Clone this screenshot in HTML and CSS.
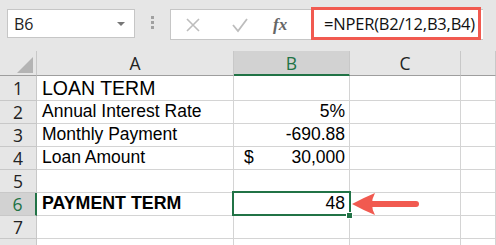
FILE: index.html
```html
<!DOCTYPE html>
<html lang="en">
<head>
  <meta charset="UTF-8" />
  <title>Loan Term</title>
  <link rel="stylesheet" href="styles.css">
</head>
<body>
  <!-- Formula bar -->
  <div class="toolbar">
    <div class="namebox">
      <span>B6</span>
      <span class="caret"></span>
    </div>
    <div class="grip"><i></i><i></i><i></i></div>
    <div class="formulabar">
      <svg class="ico" width="16" height="16" viewBox="0 0 16 16"><path d="M2 2 L14 14 M14 2 L2 14" stroke="#bdbdbd" stroke-width="1.6" fill="none"/></svg>
      <svg class="ico check" width="18" height="16" viewBox="0 0 18 16"><path d="M2 8 L7 14 L16 2" stroke="#bdbdbd" stroke-width="1.8" fill="none"/></svg>
      <span class="fx">fx</span>
      <div class="formula">=NPER(B2/12,B3,B4)</div>
    </div>
  </div>

  <!-- Sheet -->
  <div class="sheet">
    <div class="hd corner"><span class="tri"></span></div>
    <div class="hd">A</div>
    <div class="hd sel-col">B</div>
    <div class="hd">C</div>
    <div class="hd"></div>

    <div class="rn">1</div>
    <div class="cell title">LOAN TERM</div>
    <div class="cell"></div>
    <div class="cell"></div>
    <div class="cell"></div>

    <div class="rn">2</div>
    <div class="cell">Annual Interest Rate</div>
    <div class="cell num">5%</div>
    <div class="cell"></div>
    <div class="cell"></div>

    <div class="rn">3</div>
    <div class="cell">Monthly Payment</div>
    <div class="cell num">-690.88</div>
    <div class="cell"></div>
    <div class="cell"></div>

    <div class="rn">4</div>
    <div class="cell">Loan Amount</div>
    <div class="cell money"><span>$</span><span>30,000</span></div>
    <div class="cell"></div>
    <div class="cell"></div>

    <div class="rn">5</div>
    <div class="cell"></div>
    <div class="cell"></div>
    <div class="cell"></div>
    <div class="cell"></div>

    <div class="rn sel-row">6</div>
    <div class="cell bold">PAYMENT TERM</div>
    <div class="cell num active">48<span class="handle"></span></div>
    <div class="cell">
      <svg class="arrow" width="70" height="24" viewBox="0 0 70 24">
        <path d="M18 9 H65 a3 3 0 0 1 0 6 H18 Z" fill="#f15a50"/>
        <path d="M1 12 Q12 6 24 1 Q18 12 24 23 Q12 18 1 12 Z" fill="#f15a50"/>
      </svg>
    </div>
    <div class="cell"></div>

    <div class="rn">7</div>
    <div class="cell"></div>
    <div class="cell"></div>
    <div class="cell"></div>
    <div class="cell"></div>

    <div class="rn"></div>
    <div class="cell"></div>
    <div class="cell"></div>
    <div class="cell"></div>
    <div class="cell"></div>
  </div>
</body>
</html>
```

FILE: styles.css
```css
body { margin: 0; background: #e6e6e6; font-family: "Liberation Sans", Arial, sans-serif; overflow: hidden; }

.toolbar { height: 51px; display: flex; align-items: flex-start; }
.namebox { margin: 9px 0 0 7px; width: 111px; height: 27px; background: #fff; border: 1px solid #c6c6c6; display: flex; align-items: center; justify-content: space-between; font-family: "Open Sans", sans-serif; font-size: 16px; color: #222; padding: 0 9px 0 6px; }
.caret { width: 0; height: 0; border-left: 4px solid transparent; border-right: 4px solid transparent; border-top: 4px solid #777; }
.grip { margin: 16px 0 0 16px; width: 4px; display: flex; flex-direction: column; gap: 2px; }
.grip i { display: block; width: 3px; height: 3px; background: #a0a0a0; }
.formulabar { margin: 9px 0 0 15px; height: 29px; width: 312px; background: #fff; border: 1px solid #c6c6c6; border-right: none; display: flex; align-items: center; position: relative; }
.ico { margin-left: 14px; }
.check { margin-left: 30px; }
.fx { margin-left: 24px; font-family: "Liberation Serif", serif; font-style: italic; font-weight: bold; font-size: 17px; color: #666; }
.formula { position: absolute; left: 140px; top: -3px; width: 154px; height: 27px; border: 3px solid #f15a50; background: #fff; font-family: "Open Sans", sans-serif; font-size: 16.5px; color: #111; display: flex; align-items: center; padding-left: 10px; letter-spacing: -0.2px; }

.sheet { display: grid; grid-template-columns: 37px 197px 116px 111px 35px; grid-template-rows: 25px 25px repeat(7, 23px); background: #fff; }
.hd { background: #e6e6e6; border-right: 1px solid #c8c8c8; border-bottom: 1px solid #9e9e9e; font-family: "Open Sans", sans-serif; font-size: 17.5px; color: #222; display: flex; align-items: center; justify-content: center; box-sizing: border-box; }
.hd.corner { position: relative; }
.tri { position: absolute; right: 3px; bottom: 2px; width: 0; height: 0; border-left: 16px solid transparent; border-bottom: 16px solid #b4b4b4; }
.hd.sel-col { background: #d2d2d2; color: #217346; border-bottom: 2px solid #217346; }
.rn { background: #e6e6e6; border-right: 1px solid #c8c8c8; border-bottom: 1px solid #c8c8c8; font-family: "Open Sans", sans-serif; font-size: 17.5px; color: #222; display: flex; align-items: center; justify-content: center; box-sizing: border-box; }
.rn.sel-row { background: #d2d2d2; color: #217346; border-right: 2px solid #217346; }
.cell { border-right: 1px solid #d4d4d4; border-bottom: 1px solid #d4d4d4; font-size: 17.5px; color: #000; display: flex; align-items: flex-end; padding: 0 4px 1px 5px; box-sizing: border-box; white-space: nowrap; position: relative; }
.cell.title { font-size: 19.5px; padding-bottom: 0; }
.cell.bold { font-weight: bold; font-size: 17.8px; }
.cell.num { justify-content: flex-end; }
.cell.money { justify-content: space-between; padding-left: 10px; }
.cell.active::after { content: ""; position: absolute; left: -2px; top: -2px; right: -2px; bottom: -1px; border: 2px solid #217346; }
.handle { position: absolute; right: -4px; bottom: -4px; width: 5px; height: 5px; background: #217346; border: 1px solid #fff; z-index: 2; }
.arrow { position: absolute; left: 1px; top: -1px; }
```
